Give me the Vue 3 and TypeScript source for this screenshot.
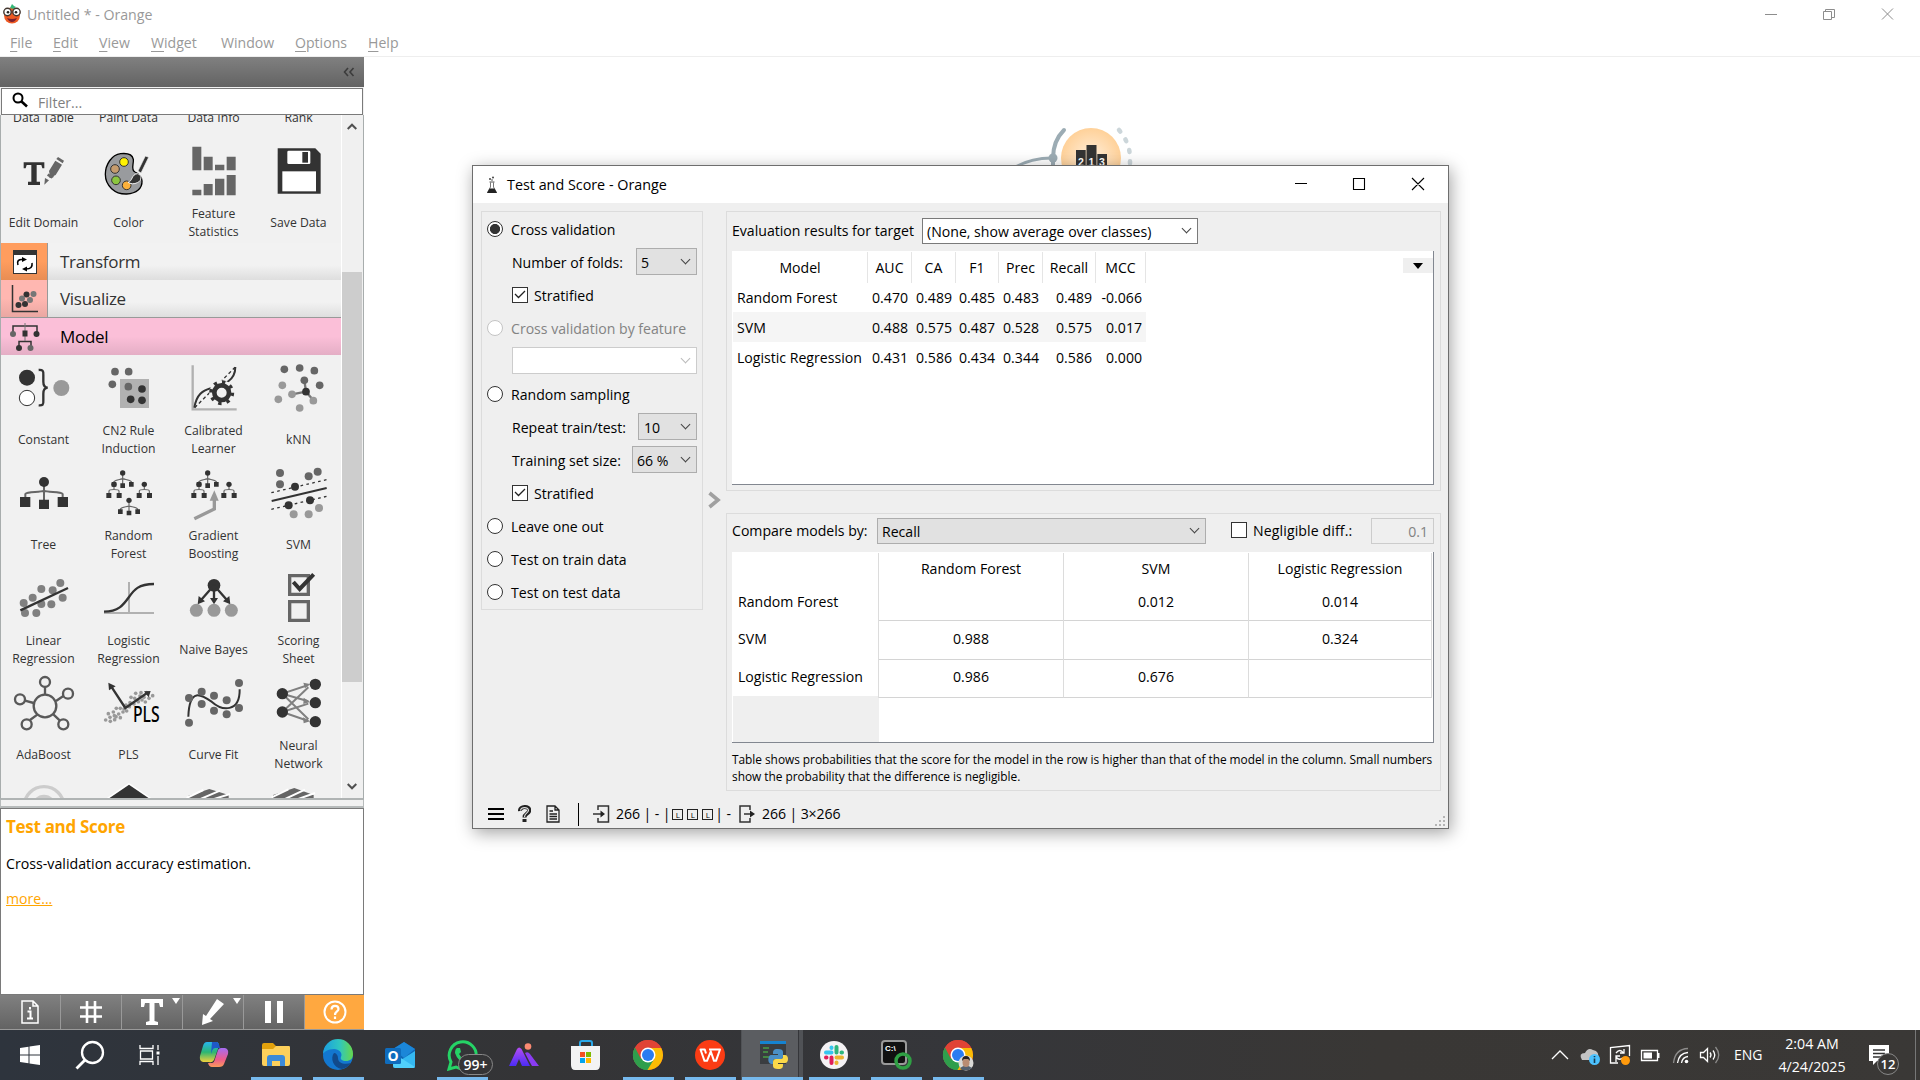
<script setup lang="ts">
interface Tile { label: string[]; icon: string; box: string }
interface Score { model: string; values: string[] }

const tree = (x: number, y: number) =>
  `<g transform="translate(${x} ${y})"><path d="M0 0V34M0 17C-8 20 -22 20 -26 26V34M0 17C8 20 22 20 26 26V34" fill="none" stroke="#666" stroke-width="3.5"/><circle r="8" fill="#333"/><path d="M-33 27h14v14h-14zM-7 31h14v14h-14zM19 27h14v14h-14z" fill="#333"/></g>`
const pair = (x: number, y: number) =>
  `<g transform="translate(${x} ${y})"><path d="M0 0V14M-15 30V20C-14 14 14 14 15 20V30" fill="none" stroke="#666" stroke-width="3.5"/><circle r="8" fill="#333"/><path d="M-23 26h15v15h-15zM8 26h15v15h-15z" fill="#333"/></g>`
const dots = (pts: number[][], r: number, fill: string) =>
  pts.map(([x, y]) => `<circle cx="${x}" cy="${y}" r="${r}" fill="${fill}"/>`).join('')

const cols = [36, 291, 546, 801]
const row = (top: number, entries: [string, string][]): Tile[] =>
  entries.map(([label, icon], i) => ({ label: label.split('|'), icon, box: `${cols[i]} ${top} 192 180` }))

const plsDots = [[317, 180], [325, 161], [330, 172], [340, 156], [343, 167], [331, 184], [344, 179], [349, 145], [356, 162], [348, 170], [361, 173], [361, 145], [369, 156], [372, 147], [380, 153], [378, 135], [390, 128], [393, 112], [407, 100], [404, 115], [423, 98], [420, 108], [415, 125], [432, 112], [440, 98], [458, 107], [447, 115], [436, 126], [426, 120], [402, 132], [388, 140]]

const dataTiles: Tile[] = row(420, [
  ['Edit Domain', '<path d="M71 484H133V502H127L124 492H110V542H120V552H84V542H94V492H80L77 502H71Z" fill="#333"/><path d="M147 510L166 479L186 491L167 522L162 524L160 529L154 532L148 530L149 521Z" fill="#666"/><path d="M169 474L174 468L192 479L188 487Z" fill="#666"/><path d="M135 531L147 538L133 551Z" fill="#666"/><path d="M143 521L157 529" stroke="#666" stroke-width="8"/>'],
  ['Color', '<path d="M362 458C335 461 316 491 316 520C316 555 345 580 380 579C410 577 427 562 426 540C425 524 415 517 405 513C391 506 402 489 400 475C397 460 380 456 362 458Z" fill="#999b9e" stroke="#000" stroke-width="4"/><g stroke="#333" stroke-width="3"><circle cx="372" cy="483" r="13" fill="#fff200"/><circle cx="345" cy="504" r="13" fill="#c69c6d"/><circle cx="348" cy="538" r="13" fill="#8cc63f"/><circle cx="380" cy="553" r="13" fill="#fbb03b"/></g><path d="M384 544C398 541 394 520 412 518C427 520 426 540 412 545C403 550 391 549 384 544Z" fill="#333" stroke="#f1f1f1" stroke-width="3"/><path d="M414 510L436 465L446 469L423 516Z" fill="#333" stroke="#f1f1f1" stroke-width="2"/>'],
  ['Feature|Statistics', '<path d="M577 437h27v71h-27zM611 467h27v41h-27zM645 491h28v17h-28zM680 467h27v41h-27zM577 566h27v17h-27zM611 549h27v34h-27zM645 533h28v50h-28zM680 522h27v61h-27z" fill="#666"/>'],
  ['Save Data', '<path d="M833 442H946L962 458V578H833Z" fill="#333"/><rect x="862" y="449" width="69" height="40" rx="4" fill="#fff"/><rect x="907" y="453" width="17" height="32" fill="#333"/><rect x="847" y="511" width="101" height="60" fill="#fff"/>'],
])

const modelTiles: Tile[] = [
  ...row(354, [
    ['Constant', '<circle cx="81" cy="413" r="24" fill="#333"/><circle cx="81" cy="474" r="23" fill="#fff" stroke="#333" stroke-width="3"/><path d="M116 390C128 389 131 392 130 405V425C130 436 133 442 143 443C133 444 130 450 130 461V481C131 494 128 497 116 496" fill="none" stroke="#333" stroke-width="7"/><circle cx="184" cy="444" r="24" fill="#999"/>'],
    ['CN2 Rule|Induction', '<rect x="360" y="417" width="87" height="87" fill="#b1b1b1"/>' + dots([[345, 395], [386, 395], [337, 433], [385, 440]], 11.5, '#666') + dots([[426, 447], [392, 478], [426, 481]], 11.5, '#333')],
    ['Calibrated|Learner', '<path d="M578 376V508H710" fill="none" stroke="#b1b1b1" stroke-width="7"/><path d="M584 503L705 382" stroke="#333" stroke-width="4" stroke-dasharray="10 8"/><path d="M583 503C590 462 608 452 632 445C675 435 706 420 706 381" fill="none" stroke="#333" stroke-width="6"/><circle cx="665" cy="458" r="37" fill="#f1f1f1"/><circle cx="665" cy="458" r="22" fill="none" stroke="#333" stroke-width="14"/><circle cx="665" cy="458" r="32" fill="none" stroke="#333" stroke-width="11" stroke-dasharray="10 15.13"/>'],
    ['kNN', '<path d="M913 421L918 455L876 463M918 455L940 481" fill="none" stroke="#777" stroke-width="7"/>' + dots([[853, 388], [899, 384], [943, 392], [913, 421], [959, 436]], 11.5, '#666') + dots([[847, 436], [835, 478], [899, 504], [876, 463], [940, 482]], 11.5, '#999') + dots([[918, 455]], 11.5, '#333')],
  ]),
  ...row(9, [
    ['Tree', '<path d="M132 66V130M132 92C120 98 82 94 76 102V118M132 92C144 98 182 94 188 102V118" fill="none" stroke="#666" stroke-width="6"/><circle cx="132" cy="66" r="15" fill="#333"/><path d="M60 111h31v30h-31zM117 119h30v28h-30zM173 111h31v30h-31z" fill="#333"/>'],
    ['Random|Forest', tree(368, 39) + pair(342, 73) + pair(433, 73) + tree(387, 121)],
    ['Gradient|Boosting', tree(623, 39) + pair(597, 73) + pair(687, 73) + '<path d="M583 176L643 147V112" fill="none" stroke="#999" stroke-width="10"/><path d="M629 122L643 91L656 122Z" fill="#999"/>'],
    ['SVM', '<path d="M815 123L980 84" stroke="#333" stroke-width="6"/><path d="M814 98L980 59M814 148L980 109" stroke="#333" stroke-width="4" stroke-dasharray="8 10"/>' + dots([[840, 39], [840, 73], [926, 49], [953, 35]], 12, '#666') + dots([[885, 80], [866, 136], [930, 121]], 12, '#333') + dots([[881, 163], [926, 163], [957, 144]], 12, '#999')],
  ]),
  ...row(324, [
    ['Linear|Regression', dots([[181, 369], [158, 391], [124, 387], [188, 413], [98, 413], [71, 429], [124, 432], [154, 433], [75, 459], [109, 459]], 12, '#808080') + '<path d="M61 451L204 384" stroke="#333" stroke-width="7"/>'],
    ['Logistic|Regression', '<path d="M387 366V459M312 459H462" stroke="#b1b1b1" stroke-width="6"/><path d="M312 455C355 455 370 435 387 411C402 390 415 372 462 372" fill="none" stroke="#333" stroke-width="7"/>'],
    ['Naive Bayes', '<circle cx="642" cy="376" r="19" fill="#333"/><path d="M642 376L600 424M642 376V420M642 376L684 424" stroke="#333" stroke-width="7"/><path d="M593 433L596 408L615 424ZM630 414H654L642 433ZM691 433L688 408L669 424Z" fill="#333"/>' + dots([[589, 451], [642, 451], [694, 451]], 19.5, '#999')],
    ['Scoring|Sheet', '<path d="M869 347h56v56h-56zM869 425h56v56h-56z" fill="none" stroke="#666" stroke-width="10"/><path d="M880 366L899 387L941 343" fill="none" stroke="#333" stroke-width="12"/>'],
  ]),
  ...row(39, [
    ['AdaBoost', '<g fill="none" stroke="#595959" stroke-width="7"><circle cx="135" cy="138" r="34"/><circle cx="135" cy="66" r="15"/><circle cx="204" cy="101" r="15"/><circle cx="60" cy="118" r="15"/><circle cx="80" cy="193" r="15"/><circle cx="190" cy="193" r="15"/><path d="M135 82V103M190 108L168 123M75 122L101 129M90 180L112 164M179 181L160 163"/></g>'],
    ['PLS', dots(plsDots, 5.5, '#999') + '<path d="M332 77L376 144L440 100" fill="none" stroke="#333" stroke-width="7"/><path d="M325 68L347 79L327 91ZM452 93L432 94L446 112Z" fill="#333"/><text x="399" y="185" font-family="Noto Sans" font-weight="500" font-size="66" textLength="80" lengthAdjust="spacingAndGlyphs" fill="#000">PLS</text>'],
    ['Curve Fit', '<path d="M565 170C568 80 605 105 635 125C665 152 720 160 719 88" fill="none" stroke="#333" stroke-width="6"/>' + dots([[567, 114], [605, 95], [605, 132], [642, 107], [642, 152], [680, 121], [680, 163], [717, 69], [717, 144], [567, 188]], 12, '#666')],
    ['Neural|Network', '<path d="M847 101L925 75M847 101L925 124M847 101L925 178M847 156L925 82M847 156L925 131M847 156L925 183" stroke="#808080" stroke-width="6"/><path d="M930 72L910 68L915 85ZM930 126L911 113L910 132ZM930 184L909 172L911 190Z" fill="#808080"/>' + dots([[847, 101], [847, 156], [946, 73], [946, 128], [946, 185]], 17, '#333')],
  ]),
  ...row(354, [
    ['', '<circle cx="132" cy="440" r="60" fill="none" stroke="#ccc" stroke-width="10"/><circle cx="132" cy="440" r="36" fill="#ccc"/>'],
    ['', '<path d="M387 374L460 424H314Z" fill="#333" stroke="#fff" stroke-width="9"/><path d="M387 374L460 424H314Z" fill="#333"/>'],
    ['', '<path d="M564 408L628 387L686 405V424H564Z" fill="#666"/><path d="M585 424L660 392M620 424L690 402M560 414L610 390" stroke="#fff" stroke-width="6"/>'],
    ['', '<path d="M819 405L883 384L941 405V424H819Z" fill="#666"/><path d="M840 424L915 389M875 424L945 399M815 412L865 388" stroke="#fff" stroke-width="6"/>'],
  ]),
]

const menus = [
  { text: 'File', x: 10 }, { text: 'Edit', x: 53 }, { text: 'View', x: 99 }, { text: 'Widget', x: 151 },
  { text: 'Window', x: 221 }, { text: 'Options', x: 295 }, { text: 'Help', x: 368 },
].map((m, i, all) => ({ ...m, width: (all[i + 1]?.x ?? 420) - m.x }))

const metrics = ['AUC', 'CA', 'F1', 'Prec', 'Recall', 'MCC']
const scores: Score[] = [
  { model: 'Random Forest', values: ['0.470', '0.489', '0.485', '0.483', '0.489', '-0.066'] },
  { model: 'SVM', values: ['0.488', '0.575', '0.487', '0.528', '0.575', '0.017'] },
  { model: 'Logistic Regression', values: ['0.431', '0.586', '0.434', '0.344', '0.586', '0.000'] },
]
const comparisons: Score[] = [
  { model: 'Random Forest', values: ['', '0.012', '0.014'] },
  { model: 'SVM', values: ['0.988', '', '0.324'] },
  { model: 'Logistic Regression', values: ['0.986', '0.676', ''] },
]

const chrome = '<circle cx="16" cy="16" r="15" fill="#ea4335"/><path d="M16 16L3 8.5A15 15 0 0 0 16 31L22.5 19.7Z" fill="#34a853"/><path d="M3 8.5A15 15 0 0 0 15 31L22 20L16 16Z" fill="#2f9e4c"/><path d="M16 9H29.3A15 15 0 0 1 15.5 31L22.5 19.5Z" fill="#fbbc05"/><path d="M3 8.5A15 15 0 0 1 29.3 9H16L9 20Z" fill="#e04335"/><circle cx="16" cy="16" r="7.5" fill="#fff"/><circle cx="16" cy="16" r="6" fill="#2a7cf0"/>'
const apps: { name: string; running?: boolean; active?: boolean; icon: string }[] = [
  { name: 'copilot', icon: '<defs><linearGradient id="cpa" x1="0" y1="0" x2="0" y2="1"><stop stop-color="#27b5f0"/><stop offset=".5" stop-color="#2bb673"/><stop offset="1" stop-color="#f5d23b"/></linearGradient><linearGradient id="cpb" x1="0" y1="0" x2="0" y2="1"><stop stop-color="#a46cf3"/><stop offset=".6" stop-color="#ee5c8c"/><stop offset="1" stop-color="#fb9a5a"/></linearGradient></defs><path d="M9 3H18Q21 3 21 7L16 21Q14 24 11 23H5Q1 22 2 17L5 7Q6 3 9 3Z" fill="url(#cpa)"/><path d="M14 3H19Q21 4 22 9H17Q15 9 14 12L13 15Z" fill="#1f58c8"/><path d="M23 9H27Q31 10 30 15L26 25Q25 28 21 28H14Q11 28 10 24H14Q16 24 17 20L20 11Q21 9 23 9Z" fill="url(#cpb)"/>' },
  { name: 'explorer', running: true, icon: '<path d="M2 6Q2 4 4 4H13L16 7H28Q30 7 30 9V12H2Z" fill="#e2a10c"/><path d="M2 10H13L16 7H29Q30 7 30 9V25Q30 27 28 27H4Q2 27 2 25Z" fill="#fdd05b"/><path d="M7 27V19Q7 16 10 16H22Q25 16 25 19V27H20V22H12V27Z" fill="#3c8ad8"/>' },
  { name: 'edge', running: true, icon: '<defs><linearGradient id="ed" x1="0" x2="1"><stop stop-color="#1a9de0"/><stop offset=".55" stop-color="#2fc6c0"/><stop offset="1" stop-color="#67d84a"/></linearGradient></defs><circle cx="16" cy="16" r="15" fill="#1377cf"/><path d="M1 15A15 15 0 0 1 31 15C31 20 28 22 24 22C20 22 18 20 19 18C21 14 17 10 12 10C6 10 2 13 1 15Z" fill="url(#ed)"/><path d="M12 14C8 19 11 29 20 30C24 29 27 27 29 24C22 26 16 24 16 19C16 16 14 14 12 14Z" fill="#114a8b"/>' },
  { name: 'outlook', icon: '<path d="M9 10L20 3L31 10V27Q31 29 29 29H11Q9 29 9 27Z" fill="#1066b5"/><path d="M9 10L20 3L31 10L20 19Z" fill="#1b86d8"/><path d="M31 12V27Q31 29 29 29H12L9 26Z" fill="#35b8f1"/><path d="M9 14L31 28Q30 29 29 29H11Q9 29 9 27Z" fill="#50d0fb"/><rect x="1" y="9" width="16" height="16" rx="1.5" fill="#0f6cbd"/><text x="9" y="22" font-family="Open Sans" font-weight="700" font-size="14" text-anchor="middle" fill="#fff">O</text>' },
  { name: 'whatsapp', running: true, icon: '<path d="M3 30L5 23A13.500 13.500 0 1 1 10 28Z" fill="none" stroke="#25d366" stroke-width="3"/><path d="M11 9L14 9L15 13L13 15Q15 19 18 20L21 18L24 20Q23 24 20 24Q12 23 9 14Q9 10 11 9Z" fill="#25d366"/>' },
  { name: 'assistant', icon: '<defs><linearGradient id="ai" x1="0" y1="0" x2="0" y2="1"><stop stop-color="#b44df2"/><stop offset="1" stop-color="#4b2cf5"/></linearGradient></defs><path d="M1 27L9 10Q11 7 13.500 10L22 27H14L11 20L8 27Z" fill="url(#ai)"/><path d="M17 14Q20 12 22 15L31 27H24Q21 22 17 14Z" fill="#8a3cf2"/><circle cx="20" cy="7.500" r="3.300" fill="#fb8a72"/>' },
  { name: 'store', icon: '<path d="M10 8V4Q10 2 12 2H20Q22 2 22 4V8" fill="none" stroke="#29a9ea" stroke-width="2"/><path d="M1 7H30V26Q30 31 26 31H5Q1 31 1 26Z" fill="#f3f3f3"/><path d="M10 13h5v5h-5z" fill="#f25022"/><path d="M16 13h5v5h-5z" fill="#7fba00"/><path d="M10 19h5v5h-5z" fill="#00a4ef"/><path d="M16 19h5v5h-5z" fill="#ffb900"/>' },
  { name: 'chrome', running: true, icon: chrome },
  { name: 'wps', running: true, icon: '<circle cx="16" cy="16" r="15" fill="#fb3c14"/><path d="M12 14.500L10.800 10.500H6.500L10.500 21.800H13L16.800 12.500L20 21.800H22L26 10.500H15" fill="none" stroke="#fff" stroke-width="2" stroke-linejoin="round"/>' },
  { name: 'python', running: true, active: true, icon: '<rect x="4" y="3" width="26" height="22" fill="#3a3d40"/><rect x="4" y="2" width="26" height="3" fill="#1583d0"/><path d="M7 9h6M7 13h5M7 18h6" stroke="#4a9d45" stroke-width="1.500"/><path d="M22 10C17 10 17 12 17 15H22V16H15C12 16 11 24 15 25H17V22Q17 20 20 20H25Q27 20 27 17V13Q27 10 22 10Z" fill="#4a8fc6"/><path d="M22 30C27 30 27 28 27 25H22V24H29C33 24 33 16 29 16H27V18Q27 20 24 20H20Q17 20 17 23V27Q17 30 22 30Z" fill="#fbd949"/>' },
  { name: 'slack', running: true, icon: '<circle cx="16" cy="16" r="14" fill="#f4f2f4"/><g stroke-width="4" stroke-linecap="round"><path d="M13.500 8.500V9M8 13.500H13.500" stroke="#36c5f0"/><path d="M18.500 8V13.500M23.500 13.500H24" stroke="#2eb67d"/><path d="M18.500 18.500H24M18.500 23.500V24" stroke="#ecb22e"/><path d="M13.500 18.500V24M8 18.500H8.500" stroke="#e01e5a"/></g>' },
  { name: 'terminal', running: true, icon: '<rect x="2" y="2" width="24" height="23" rx="3" fill="#111" stroke="#999" stroke-width="2"/><text x="5" y="12" font-family="Liberation Sans" font-weight="700" font-size="8" fill="#fff">C:\\</text><circle cx="23" cy="22" r="7" fill="none" stroke="#2fa044" stroke-width="3.500"/>' },
  { name: 'chrome-profile', running: true, icon: chrome + '<circle cx="24" cy="24" r="7.500" fill="#d9d9d6"/><path d="M18 29Q24 24 30 29L27 31H20Z" fill="#55606e"/><ellipse cx="24" cy="23.500" rx="3.500" ry="4.500" fill="#b98c72"/><path d="M20 22Q20 17 24 17Q28 17 28 22L26 20H22Z" fill="#29211f"/>' },
]
</script>

<template>
  <div class="screen">
    <header class="titlebar">
      <svg class="logo" width="20" height="20" viewBox="0 0 20 20">
        <circle cx="10" cy="11.500" r="8" fill="#ee5a24" />
        <path d="M8 4L10 0L12 2L14 3L11 5Z" fill="#35b779" />
        <circle cx="5.500" cy="8" r="3.700" fill="#fff" stroke="#42352e" stroke-width="1.400" />
        <circle cx="14.500" cy="8" r="3.700" fill="#fff" stroke="#42352e" stroke-width="1.400" />
        <circle cx="6" cy="8.300" r="1.300" fill="#222" /><circle cx="14" cy="8.300" r="1.300" fill="#222" />
        <path d="M5 14Q10 16 15 14Q13 18 10 18Q7 18 5 14Z" fill="#7a2030" />
      </svg>
      <span class="apptitle">Untitled * - Orange</span>
      <svg class="appctl" width="140" height="20" viewBox="0 0 140 20" fill="none" stroke="#8d8d8d">
        <path d="M5 10.500H17" /><path d="M63.500 7.500H71.500V15.500H63.500ZM65.500 7.500V5.500H74.500V13.500H71.500" />
        <path d="M122 4.500L133 15.500M133 4.500L122 15.500" />
      </svg>
    </header>
    <nav class="menubar">
      <span v-for="m in menus" :key="m.text" class="menu" :style="{ width: m.width + 'px' }"><u v-if="m.text !== 'Window'">{{ m.text[0] }}</u><template v-else>W</template>{{ m.text.slice(1) }}</span>
    </nav>

    <div class="workspace">
      <aside class="sidebar">
        <div class="dockhead">
          <svg width="12" height="10" viewBox="0 0 12 10" fill="none" stroke="#3c3c3c" stroke-width="1.600"><path d="M5 1L1.500 5L5 9M10.500 1L7 5L10.500 9" /></svg>
        </div>
        <div class="filter">
          <svg width="16" height="16" viewBox="0 0 16 16" fill="none" stroke="#000"><circle cx="6" cy="6" r="4.500" stroke-width="2" /><path d="M9 9L15 14.500" stroke-width="2.600" /></svg>
          <span>Filter...</span>
        </div>
        <div class="toolbox">
          <div class="toolscroll">
            <div class="peek"><span>Data Table</span><span>Paint Data</span><span>Data Info</span><span>Rank</span></div>
            <div class="tiles">
              <div v-for="t in dataTiles" :key="t.label[0]" class="tile">
                <svg width="64" height="60" :viewBox="t.box" v-html="t.icon" />
                <div class="tlabel"><span v-for="l in t.label" :key="l">{{ l }}</span></div>
              </div>
            </div>
            <div class="cat">
              <div class="caticon transform"><svg width="24" height="24" viewBox="0 0 24 24"><rect x=".5" y=".5" width="23" height="23" fill="#fff" stroke="#333" /><path d="M0 0H24V5H0Z" fill="#333" /><path d="M5 15Q3 9 10 9.500M19 13Q20 19 13 19" fill="none" stroke="#000" stroke-width="1.600" /><path d="M9 7L14 9.500L9 12ZM14 16.500L9 19L14 21.500Z" /></svg></div>
              <span>Transform</span>
            </div>
            <div class="cat">
              <div class="caticon visualize"><svg width="28" height="28" viewBox="0 0 28 28"><path d="M1.500 0V26.500H27" fill="none" stroke="#333" stroke-width="1.500" /><g fill="#333"><circle cx="7.500" cy="20" r="3" /><circle cx="14" cy="19" r="3" /><circle cx="15.500" cy="9.500" r="3" /></g><g fill="#777"><circle cx="11" cy="13.500" r="3" /><circle cx="19" cy="15" r="3" /><circle cx="22.500" cy="9" r="3" /></g></svg></div>
              <span>Visualize</span>
            </div>
            <div class="cat model">
              <div class="caticon"><svg width="30" height="28" viewBox="0 0 30 28"><path d="M3 10V3H27V10M9 24V18.500H21V24" fill="none" stroke="#333" stroke-width="1.500" /><path d="M15 0V18" stroke="#777" /><rect x="12.500" y="7.500" width="5" height="6" fill="#333" /><circle cx="3" cy="11" r="3" fill="#666" /><circle cx="26.500" cy="11" r="3" fill="#333" /><circle cx="9" cy="25" r="3" fill="#333" /><circle cx="20.500" cy="25" r="3" fill="#666" /></svg></div>
              <span>Model</span>
            </div>
            <div class="tiles">
              <div v-for="(t, i) in modelTiles" :key="i" class="tile">
                <svg width="64" height="60" :viewBox="t.box" v-html="t.icon" />
                <div class="tlabel"><span v-for="l in t.label" :key="l">{{ l }}</span></div>
              </div>
            </div>
          </div>
          <div class="scrollbar">
            <svg width="10" height="7" viewBox="0 0 10 7" fill="none" stroke="#505050" stroke-width="2"><path d="M.7 6L5 1.700L9.300 6" /></svg>
            <div class="thumb"></div>
            <svg width="10" height="7" viewBox="0 0 10 7" fill="none" stroke="#505050" stroke-width="2"><path d="M.7 1L5 5.300L9.300 1" /></svg>
          </div>
        </div>
        <div class="splitter"></div>
        <section class="help">
          <h3>Test and Score</h3>
          <p>Cross-validation accuracy estimation.</p>
          <a>more...</a>
        </section>
        <div class="dock">
          <span><svg width="18" height="24" viewBox="0 0 18 24" fill="none" stroke="#fff" stroke-width="1.500"><path d="M1 1H12L17 6V23H1ZM12 1V6H17" /><path d="M9 7V9.500M6.500 11.500H9.500V18M6 18.500H12" stroke-width="2" /></svg></span>
          <span><svg width="24" height="24" viewBox="0 0 24 24" fill="none" stroke="#fff" stroke-width="2.600"><path d="M8 1V23M16 1V23M1 7.500H23M1 16.500H23" /></svg></span>
          <span><svg width="24" height="26" viewBox="0 0 24 26" fill="#fff"><path d="M1 0H23V8H20L19 4H14.500V22L18 23V26H6V23L9.500 22V4H5L4 8H1Z" /></svg><i></i></span>
          <span><svg width="24" height="26" viewBox="0 0 24 26" fill="#fff"><path d="M16 0L23 5L9 20L12 22L1 26L2 15L5 17Z" /></svg><i></i></span>
          <span><svg width="18" height="24" viewBox="0 0 18 24" fill="#fff"><path d="M0 1H6V23H0ZM12 1H18V23H12Z" /></svg></span>
          <span class="on"><svg width="24" height="24" viewBox="0 0 24 24" fill="none" stroke="#fff" stroke-width="2"><circle cx="12" cy="12" r="10.500" /><path d="M8.500 9.500C8.500 4.500 15.500 5 15.500 9C15.500 11.500 12 11.500 12 15M12 16.500V19" stroke-width="2.200" /></svg></span>
        </div>
      </aside>

      <main class="canvas">
        <svg class="node" width="140" height="66" viewBox="1000 120 140 66">
          <defs><radialGradient id="nodefill"><stop offset=".3" stop-color="#ffe6c8" /><stop offset="1" stop-color="#ffd199" /></radialGradient></defs>
          <path d="M1014 168Q1030 158 1052 158" fill="none" stroke="#9cacb4" stroke-width="3" />
          <path d="M1064 130Q1053 141 1053 158V180" fill="none" stroke="#9cacb4" stroke-width="4" stroke-linecap="round" />
          <circle cx="1053" cy="158" r="4.500" fill="#9cacb4" />
          <path d="M1119 130Q1130 143 1130 158V180" fill="none" stroke="#ccd6da" stroke-width="4.500" stroke-linecap="round" stroke-dasharray="2 9.300" />
          <circle cx="1091" cy="158" r="30" fill="url(#nodefill)" />
          <path d="M1076 150H1085.700V180H1076ZM1086.500 145H1096.500V180H1086.500ZM1097.300 154H1107V180H1097.300Z" fill="#333" />
          <text x="1081" y="165.500" font-family="Liberation Sans" font-weight="700" font-size="10.500" text-anchor="middle" fill="#fff">2</text>
          <text x="1091.500" y="165.500" font-family="Liberation Sans" font-weight="700" font-size="10.500" text-anchor="middle" fill="#fff">1</text>
          <text x="1102" y="165.500" font-family="Liberation Sans" font-weight="700" font-size="10.500" text-anchor="middle" fill="#fff">3</text>
        </svg>

        <section class="dialog">
          <header class="dtitle">
            <svg width="12" height="18" viewBox="0 0 12 18"><path d="M4.500 6.500V11L1.500 16.500H10.500L7.500 11V6.500" fill="none" stroke="#777" /><path d="M3.500 12.500H8.500L11 17H1Z" fill="#222" /><path d="M3.500 6H8.500" stroke="#555" /><circle cx="4" cy="3" r="1" fill="#444" /><circle cx="7" cy="1.500" r="1" fill="#444" /><circle cx="6" cy="4" r=".8" fill="#444" /></svg>
            <span class="dname">Test and Score - Orange</span>
            <svg class="dctl" width="132" height="14" viewBox="0 0 132 14" fill="none" stroke="#000" stroke-width="1.100"><path d="M1 6.500H13M59.500 1.500H70.500V12.500H59.500ZM118 1L130 13M130 1L118 13" /></svg>
          </header>
          <div class="dbody">
            <div class="options">
              <div class="row"><i class="radio checked"></i><span>Cross validation</span></div>
              <div class="row sub"><span>Number of folds:</span><div class="combo folds">5<b></b></div></div>
              <div class="row sub"><i class="check"><svg width="12" height="9" viewBox="0 0 12 9" fill="none" stroke="#222" stroke-width="1.300"><path d="M1 4L4.500 7.500L11 1" /></svg></i><span>Stratified</span></div>
              <div class="row off"><i class="radio"></i><span>Cross validation by feature</span></div>
              <div class="row sub off"><div class="combo blank"><b></b></div></div>
              <div class="row"><i class="radio"></i><span>Random sampling</span></div>
              <div class="row sub"><span>Repeat train/test:</span><div class="combo repeat">10<b></b></div></div>
              <div class="row sub"><span>Training set size:</span><div class="combo size">66 %<b></b></div></div>
              <div class="row sub"><i class="check"><svg width="12" height="9" viewBox="0 0 12 9" fill="none" stroke="#222" stroke-width="1.300"><path d="M1 4L4.500 7.500L11 1" /></svg></i><span>Stratified</span></div>
              <div class="row"><i class="radio"></i><span>Leave one out</span></div>
              <div class="row"><i class="radio"></i><span>Test on train data</span></div>
              <div class="row last"><i class="radio"></i><span>Test on test data</span></div>
            </div>
            <div class="grip"><svg width="13" height="18" viewBox="0 0 13 18" fill="none" stroke="#a0a0a0" stroke-width="3.600"><path d="M1.500 2L10 9L1.500 16" /></svg></div>
            <div class="results">
              <div class="group evaluation">
                <div class="bar"><span class="evlabel">Evaluation results for target</span><div class="combo target">(None, show average over classes)<b></b></div></div>
                <div class="view scoreview">
                  <div class="srow shead"><span>Model</span><span v-for="m in metrics" :key="m">{{ m }}</span></div>
                  <div v-for="s in scores" :key="s.model" class="srow"><span>{{ s.model }}</span><span v-for="(v, i) in s.values" :key="i">{{ v }}</span></div>
                  <div class="picker"><svg width="10" height="6" viewBox="0 0 10 6"><path d="M0 0H10L5 6Z" /></svg></div>
                </div>
              </div>
              <div class="group compare">
                <div class="bar"><span class="cmplabel">Compare models by:</span><div class="combo metric">Recall<b></b></div><i class="check negl"></i><span class="negtext">Negligible diff.:</span><div class="spin">0.1</div></div>
                <div class="view compview">
                  <div class="crow chead"><span></span><span v-for="c in comparisons" :key="c.model">{{ c.model }}</span></div>
                  <div v-for="c in comparisons" :key="c.model" class="crow"><span>{{ c.model }}</span><span v-for="(v, i) in c.values" :key="i">{{ v }}</span></div>
                  <div class="corner"></div>
                </div>
                <p class="note"><span>Table shows probabilities that the score for the model in the row is higher than that of the model in the column. Small numbers</span><br /><span>show the probability that the difference is negligible.</span></p>
              </div>
            </div>
          </div>
          <footer class="status">
            <svg width="16" height="14" viewBox="0 0 16 14" stroke="#000" stroke-width="2"><path d="M0 2H16M0 7H16M0 12H16" /></svg>
            <svg class="q" width="13" height="18" viewBox="0 0 13 18" fill="none"><path d="M2 6C1.500 1 11.500 .5 11.300 5.500C11 9 6.500 8.500 6.500 12.500M6.500 14V17" stroke="#222" stroke-width="4" /><path d="M2.600 5.500C2.500 1.700 10.500 1.500 10.500 5.500C10 8.500 6.500 8 6.500 12" stroke="#ddd" stroke-width="1.200" /></svg>
            <svg class="doc" width="14" height="18" viewBox="0 0 14 18" fill="none" stroke="#222" stroke-width="1.300"><path d="M1 1H9L13 5V17H1ZM9 1V5H13M3.500 6H7M3.500 9H11M3.500 11.500H11M3.500 14H11" /></svg>
            <i class="vsep"></i>
            <svg class="inp" width="17" height="18" viewBox="0 0 17 18" fill="none" stroke="#333" stroke-width="1.500"><path d="M5 5V1H15.500V17H5V13M0 9H9" /><path d="M7.500 5.500L12 9L7.500 12.500Z" fill="#222" stroke="none" /></svg>
            <span class="intext">266 | - |<em>L</em><em>L</em><em>L</em>| -</span>
            <svg class="outp" width="17" height="18" viewBox="0 0 17 18" fill="none" stroke="#333" stroke-width="1.500"><path d="M11 5V1H1V17H11V13M5 9H12" /><path d="M11 5.500L16 9L11 12.500Z" fill="#222" stroke="none" /></svg>
            <span class="outtext">266 | 3×266</span>
            <svg class="sizegrip" width="12" height="12" viewBox="0 0 12 12" fill="#b4b4b4"><path d="M9 0h2v2h-2zM9 4h2v2h-2zM9 8h2v2h-2zM5 4h2v2h-2zM5 8h2v2h-2zM1 8h2v2h-2z" /></svg>
          </footer>
        </section>
      </main>
    </div>

    <footer class="taskbar">
      <span class="sys"><svg width="20" height="20" viewBox="0 0 20 20" fill="#fff"><path d="M0 3L8.500 1.800V9.500H0ZM9.500 1.600L20 0V9.500H9.500ZM0 10.500H8.500V18.200L0 17ZM9.500 10.500H20V20L9.500 18.400Z" /></svg></span>
      <span class="sys"><svg width="30" height="30" viewBox="0 0 30 30" fill="none" stroke="#fff" stroke-width="2.300"><circle cx="17.500" cy="12.500" r="10.500" /><path d="M10 20L1.500 28.500" stroke-width="2.800" /></svg></span>
      <span class="sys view-btn"><svg width="22" height="20" viewBox="0 0 22 20" fill="none" stroke="#fff" stroke-width="1.300"><path d="M1 0V3.500H14V0M1 20V16.500H14V20M1.500 6H13.500V14H1.500ZM19 0V5M19 11V20" /><path d="M19 6.500V9.500" stroke-width="3" /></svg></span>
      <span v-for="a in apps" :key="a.name" class="app" :class="{ running: a.running, active: a.active }">
        <svg width="32" height="32" viewBox="0 0 32 32" v-html="a.icon" />
        <span v-if="a.name === 'whatsapp'" class="badge">99+</span>
      </span>
      <div class="trayicons">
        <svg width="170" height="30" viewBox="1550 1040 170 30" fill="none" stroke="#fff" stroke-width="1.300">
          <path d="M1552 1059L1560 1051L1568 1059" />
          <path d="M1582 1060Q1578 1053 1585 1053Q1588 1047 1593 1050Q1600 1051 1598 1060Z" fill="#c4c4c4" stroke="none" />
          <circle cx="1594.500" cy="1059.500" r="5.500" fill="#4cc2ff" stroke="none" /><path d="M1594.500 1058.500V1063M1594.500 1056V1057.300" stroke="#173b50" stroke-width="1.600" />
          <path d="M1618 1063H1610.500V1047.500L1629.500 1045.500V1056" /><path d="M1616 1053Q1620 1048 1623.500 1053M1624 1049V1053H1620M1616 1062V1056H1620M1616 1057Q1619 1061 1623 1058" />
          <circle cx="1625.500" cy="1060.500" r="4.500" fill="#ff9a0c" stroke="none" />
          <path d="M1641.500 1050.500H1657.500V1060.500H1641.500Z" /><path d="M1643.500 1052.500H1652V1058.500H1643.500Z" fill="#fff" stroke="none" /><path d="M1658.500 1053V1058" stroke-width="2" />
          <path d="M1673.500 1063Q1675 1049 1688 1048.500" stroke="#8d8c8b" /><path d="M1677.500 1063Q1679 1053 1688 1052.500M1681.500 1063Q1682.500 1057 1688 1056.500" /><circle cx="1686.500" cy="1061.500" r="1.800" fill="#fff" stroke="none" />
          <path d="M1700.500 1052.500H1703.500L1707.500 1048.500V1061.500L1703.500 1057.500H1700.500Z" /><path d="M1710 1052.500Q1712 1055 1710 1057.500M1713 1050.500Q1716.500 1055 1713 1059.500" /><path d="M1715.500 1047Q1722 1055 1715.500 1063" stroke="#8d8c8b" />
        </svg>
      </div>
      <span class="lang">ENG</span>
      <div class="clock"><span>2:04 AM</span><span>4/24/2025</span></div>
      <div class="notif">
        <svg width="20" height="20" viewBox="0 0 20 20"><path d="M0 0H20V16H8L4 20V16H0Z" fill="#fff" /><path d="M4 5H16M4 8.500H16M4 12H12" stroke="#333" stroke-width="1.300" /></svg>
        <span>12</span>
      </div>
      <i class="peekline"></i>
    </footer>
  </div>
</template>

<style>
html, body { margin: 0; overflow: hidden; }
</style>

<style scoped>
.screen { width: 1920px; height: 1080px; display: flex; flex-direction: column; background: #fff; color: #000; font: 14.100px/20px "Open Sans", "Noto Sans", sans-serif; white-space: nowrap; overflow: hidden; }
.screen * { box-sizing: border-box; }
svg { display: block; flex: none; }
.titlebar { height: 28px; display: flex; align-items: center; padding: 0 20px 0 2px; color: #999; flex: none; }
.apptitle { margin-left: 5px; font-size: 14.200px; padding-top: 1px; }
.appctl { margin-left: auto; }
.menubar { height: 29px; flex: none; display: flex; padding-left: 10px; border-bottom: 1px solid #eee; color: #999; line-height: 30px; }
.menu u { text-underline-offset: 3px; text-decoration-thickness: 1px; }
.workspace { height: 973px; display: flex; flex: none; }

.sidebar { width: 364px; height: 973px; flex: none; display: flex; flex-direction: column; background: #f1f1f1; }
.dockhead { height: 30px; flex: none; display: flex; align-items: center; justify-content: flex-end; padding-right: 9px; background: linear-gradient(#808080, #636363); }
.filter { height: 27px; flex: none; margin: 1px 1px 0; border: 1px solid #7a7a7a; background: #fff; display: flex; align-items: center; padding-left: 10px; color: #7f7f7f; }
.filter svg { margin-bottom: 3px; }
.filter span { margin-left: 10px; padding-top: 3px; }
.toolbox { height: 685px; flex: none; display: flex; border-left: 1px solid #a8adad; border-right: 1px solid #a8adad; border-bottom: 2px solid #b0b4b4; overflow: hidden; }
.toolscroll { width: 340px; height: 683px; overflow: hidden; }
.peek { height: 23px; display: flex; font-size: 12.200px; color: #333; overflow: hidden; }
.peek span { width: 85px; text-align: center; line-height: 20px; margin-top: -7px; }
.tiles { display: flex; flex-wrap: wrap; width: 340px; }
.tile { width: 85px; height: 105px; display: flex; flex-direction: column; align-items: center; padding-top: 3px; }
.tlabel { height: 36px; margin-top: 4px; display: flex; flex-direction: column; justify-content: center; font-size: 12.200px; line-height: 18px; text-align: center; color: #333; }
.cat { height: 37px; display: flex; align-items: center; background: linear-gradient(#f2f2f2 60%, #dedede); font-size: 17px; letter-spacing: -.3px; color: #333; }
.cat > span { margin-left: 12px; padding-top: 1px; }
.caticon { width: 47px; height: 37px; display: flex; align-items: center; justify-content: center; border-right: 1px solid #999; padding-left: 2px; }
.transform { background: linear-gradient(#ff9d5e 50%, #e88d54); }
.visualize { background: linear-gradient(#ffb7b1 50%, #eaa7a2); }
.model { height: 38px; border-top: 1px solid #999; background: linear-gradient(#fbbfd8 50%, #e4aec5); color: #000; }
.model .caticon { border: 0; padding-left: 1px; }
.scrollbar { width: 22px; flex: none; border-left: 1px solid #fff; display: flex; flex-direction: column; align-items: center; padding: 8px 0; background: #f0f0f0; }
.scrollbar svg { margin-right: 1px; }
.thumb { width: 20px; height: 410px; margin: 142px 1px 101px 0; background: #cdcdcd; flex: none; }
.splitter { height: 8px; flex: none; border: 1px solid #b7bbbb; border-top: 0; border-bottom: 2px solid #b7bbbb; }
.help { height: 187px; flex: none; background: #fff; border: 1px solid #7a7a7a; padding: 0 5px; }
.help h3 { margin: 8px 0 0; font-size: 17px; line-height: 20px; font-weight: 700; color: #ffa500; letter-spacing: -.3px; }
.help p { margin: 17px 0 0; font-size: 14.200px; }
.help a { display: block; margin-top: 15px; color: #ffa500; text-decoration: underline; }
.dock { height: 35px; flex: none; display: flex; background: linear-gradient(#808080, #636363); border-bottom: 1px solid #999; }
.dock span { position: relative; width: 61px; display: flex; align-items: center; justify-content: center; border-right: 1px solid #999; padding-right: 1px; }
.dock span.on { background: #ffa840; border: 0; width: 59px; padding: 0; }
.dock i { position: absolute; right: 2px; top: 3px; border: 4px solid transparent; border-top: 6px solid #fff; border-bottom: 0; }

.canvas { position: relative; width: 1556px; height: 973px; }
.node { position: absolute; left: 636px; top: 63px; }
.dialog { position: absolute; left: 108px; top: 108px; width: 977px; height: 664px; background: #efefef; border: 1px solid #6e6e6e; display: flex; flex-direction: column; box-shadow: 2px 4px 16px rgba(0, 0, 0, .36); }
.dtitle { height: 37px; flex: none; background: #fff; display: flex; align-items: center; padding: 0 22px 0 13px; }
.dname { margin-left: 9px; font-size: 14.350px; }
.dctl { margin-left: auto; margin-bottom: 1px; }
.dbody { display: flex; height: 588px; padding: 8px 6px 0 8px; flex: none; }
.options { width: 222px; height: 399px; border: 1px solid #dcdcdc; padding: 0 5px 1px; flex: none; }
.row { height: 33px; display: flex; align-items: center; }
.row span { padding-top: 2px; }
.row.off { color: #838383; }
.sub { padding-left: 25px; }
.radio { width: 16px; height: 16px; border: 1px solid #333; border-radius: 50%; background: #fff; margin-right: 8px; flex: none; }
.checked { background: radial-gradient(circle, #333 0 4.700px, #fff 5.400px); }
.off .radio { border-color: #c4c4c4; }
.check { width: 16px; height: 16px; border: 1px solid #333; background: #fff; margin-right: 6px; display: flex; align-items: center; justify-content: center; flex: none; }
.combo { position: relative; height: 27px; border: 1px solid #adadad; background: #e1e1e1; margin-left: auto; padding-left: 4px; line-height: 27px; }
.combo b { position: absolute; right: 7px; top: 7px; width: 7px; height: 7px; border: solid #444; border-width: 0 1px 1px 0; transform: rotate(45deg); }
.folds { width: 61px; }
.blank { width: 185px; background: #fff; border-color: #ccc; }
.blank b { border-color: #bbb; }
.repeat { width: 59px; padding-left: 5px; }
.size { width: 65px; }
.grip { width: 23px; flex: none; padding: 280px 0 0 5px; }
.results { width: 715px; display: flex; flex-direction: column; }
.group { border: 1px solid #dcdcdc; padding: 0 5px; }
.evaluation { height: 280px; margin-bottom: 22px; }
.compare { height: 278px; }
.bar { display: flex; align-items: center; height: 39px; padding-bottom: 2px; }
.compare .bar { height: 38px; padding-bottom: 4px; }
.evlabel { width: 190px; }
.target { margin: 0; width: 276px; height: 26px; background: #fff; border-color: #7a7a7a; line-height: 25px; }
.cmplabel { width: 145px; }
.metric { margin: 0; width: 329px; height: 26px; line-height: 25px; }
.metric b { top: 6px; }
.target b { top: 6px; }
.negl { margin: -2px 6px 0 25px; }
.negtext { width: 118px; letter-spacing: .12px; }
.spin { width: 63px; height: 26px; border: 1px solid #ccc; text-align: right; padding-right: 5px; color: #838383; line-height: 26px; }
.view { position: relative; width: 702px; background: #fff; border-right: 1px solid #828790; border-bottom: 1px solid #828790; padding: 1px 0 0 1px; }
.scoreview { height: 234px; }
.srow { display: grid; grid-template-columns: 135px 44px 44px 43px 44px 53px 50px; width: 413px; height: 30px; line-height: 31px; text-align: right; }
.srow span { padding-right: 4px; }
.srow span:first-child { text-align: left; padding-left: 4px; padding-right: 0; }
.srow.shead span { text-align: center; padding: 0; border-right: 1px solid #e5e5e5; }
.srow:nth-child(3) { background: #f5f5f5; }
.picker { position: absolute; right: 0; top: 7px; width: 30px; height: 15px; background: #efefef; display: flex; align-items: center; justify-content: center; }
.compview { height: 191px; }
.crow { display: grid; grid-template-columns: 146px 185px 185px 183px; height: 38px; line-height: 41px; text-align: center; }
.crow span { border-right: 1px solid #dcdcdc; border-bottom: 1px solid #d4d4d4; }
.crow span:first-child { text-align: left; padding-left: 5px; border-bottom: 0; }
.crow.chead { height: 31px; line-height: 32px; }
.crow.chead span { border-bottom: 0; }
.crow:nth-child(2) { height: 34px; line-height: 36px; }
.corner { width: 146px; height: 46px; margin-top: 2px; background: #efefef; }
.note { margin: 8px 0 0; font-size: 11.900px; letter-spacing: -.035px; line-height: 17px; }
.status { height: 37px; display: flex; align-items: center; padding: 9px 2px 0 15px; }
.q { margin-left: 14px; }
.doc { margin-left: 15px; }
.vsep { width: 1px; height: 23px; background: #000; margin-left: 18px; }
.inp { margin-left: 14px; }
.intext { margin-left: 6px; width: 123px; display: flex; align-items: center; white-space: pre; letter-spacing: -.1px; }
.intext em { display: inline-block; width: 11px; height: 11px; margin: 0 2px; border: 1px solid #222; font: 8px/9px "Open Sans", sans-serif; text-align: center; }
.outtext { margin-left: 6px; letter-spacing: -.1px; }
.sizegrip { margin-left: auto; align-self: flex-end; }

.taskbar { height: 50px; flex: none; display: flex; background: linear-gradient(90deg, #2e343d, #343436 28%, #35363a 50%, #393735 72%, #3a3836); color: #fff; }
.sys { width: 60px; display: flex; align-items: center; justify-content: center; }
.view-btn { width: 63px; padding-right: 3px; }
.app { position: relative; width: 62px; display: flex; align-items: center; justify-content: center; flex: none; }
.app.running::after { content: ""; position: absolute; left: 6px; bottom: 0; width: 51px; height: 3px; background: #76b9ed; }
.app.active { background: linear-gradient(90deg, #5b5d61 56px, #35363a 56px, #35363a 57px, #505256 57px); background-position: 1px 0; }
.app.active::after { left: 1px; width: 61px; }
.badge { position: absolute; left: 27px; top: 24px; width: 35px; height: 21px; border: 1px solid #888; border-radius: 11px; background: #343436; font-size: 14px; font-weight: 600; line-height: 19px; text-align: center; }
.trayicons { margin-left: auto; padding-top: 10px; }
.lang { width: 28px; margin-left: 14px; line-height: 50px; font-size: 14px; }
.clock { width: 100px; display: flex; flex-direction: column; align-items: center; padding-top: 2px; line-height: 23px; font-size: 14.200px; }
.notif { position: relative; width: 46px; padding: 15px 0 0 7px; }
.notif span { position: absolute; left: 15px; top: 23px; width: 22px; height: 22px; border: 1px solid #888; border-radius: 50%; background: #3a3836; font-size: 13px; font-weight: 600; line-height: 20px; text-align: center; }
.peekline { width: 1px; height: 50px; background: #777; margin: 0 4px 0 7px; }
</style>
